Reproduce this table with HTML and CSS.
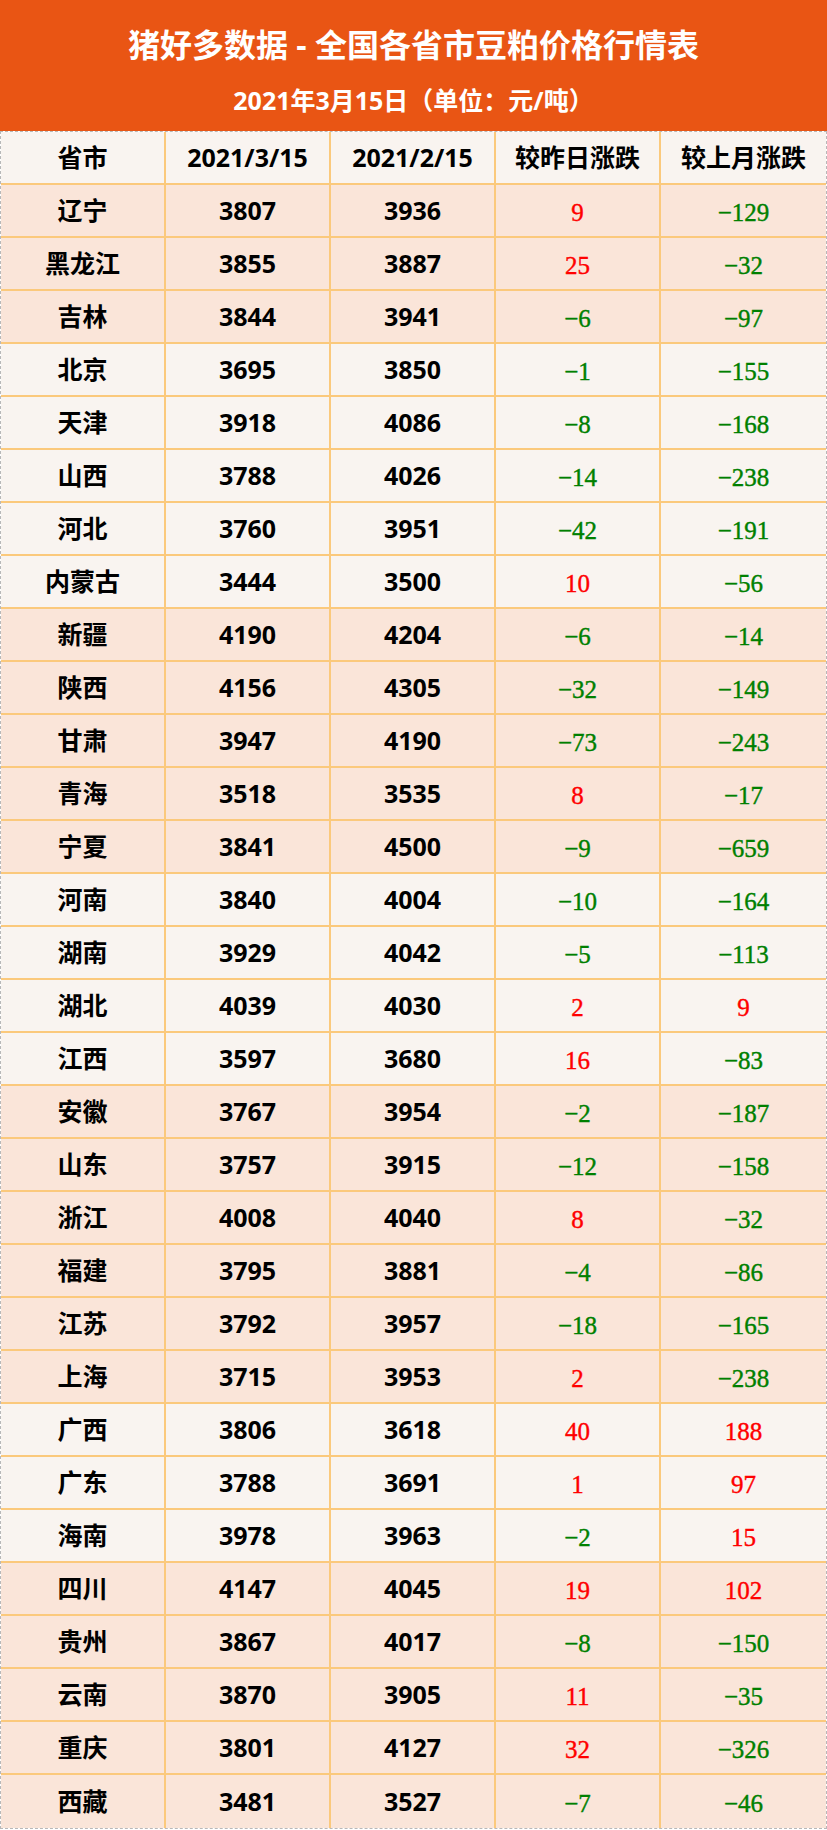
FILE: index.html
```html
<!DOCTYPE html>
<html lang="zh-CN">
<head>
<meta charset="utf-8">
<title>猪好多数据 - 全国各省市豆粕价格行情表</title>
<link rel="stylesheet" href="styles.css">
</head>
<body>
<div class="page">
  <header class="banner">
    <h1 class="title">猪好多数据 - 全国各省市豆粕价格行情表</h1>
    <p class="subtitle">2021年3月15日（单位：元/吨）</p>
  </header>
  <div class="sheet">
    <div class="row head"><div class="c">省市</div><div class="c">2021/3/15</div><div class="c">2021/2/15</div><div class="c">较昨日涨跌</div><div class="c">较上月涨跌</div></div>
    <div class="row peach"><div class="c">辽宁</div><div class="c">3807</div><div class="c">3936</div><div class="c d up">9</div><div class="c d dn">−129</div></div>
    <div class="row peach"><div class="c">黑龙江</div><div class="c">3855</div><div class="c">3887</div><div class="c d up">25</div><div class="c d dn">−32</div></div>
    <div class="row peach"><div class="c">吉林</div><div class="c">3844</div><div class="c">3941</div><div class="c d dn">−6</div><div class="c d dn">−97</div></div>
    <div class="row light"><div class="c">北京</div><div class="c">3695</div><div class="c">3850</div><div class="c d dn">−1</div><div class="c d dn">−155</div></div>
    <div class="row light"><div class="c">天津</div><div class="c">3918</div><div class="c">4086</div><div class="c d dn">−8</div><div class="c d dn">−168</div></div>
    <div class="row light"><div class="c">山西</div><div class="c">3788</div><div class="c">4026</div><div class="c d dn">−14</div><div class="c d dn">−238</div></div>
    <div class="row light"><div class="c">河北</div><div class="c">3760</div><div class="c">3951</div><div class="c d dn">−42</div><div class="c d dn">−191</div></div>
    <div class="row light"><div class="c">内蒙古</div><div class="c">3444</div><div class="c">3500</div><div class="c d up">10</div><div class="c d dn">−56</div></div>
    <div class="row peach"><div class="c">新疆</div><div class="c">4190</div><div class="c">4204</div><div class="c d dn">−6</div><div class="c d dn">−14</div></div>
    <div class="row peach"><div class="c">陕西</div><div class="c">4156</div><div class="c">4305</div><div class="c d dn">−32</div><div class="c d dn">−149</div></div>
    <div class="row peach"><div class="c">甘肃</div><div class="c">3947</div><div class="c">4190</div><div class="c d dn">−73</div><div class="c d dn">−243</div></div>
    <div class="row peach"><div class="c">青海</div><div class="c">3518</div><div class="c">3535</div><div class="c d up">8</div><div class="c d dn">−17</div></div>
    <div class="row peach"><div class="c">宁夏</div><div class="c">3841</div><div class="c">4500</div><div class="c d dn">−9</div><div class="c d dn">−659</div></div>
    <div class="row light"><div class="c">河南</div><div class="c">3840</div><div class="c">4004</div><div class="c d dn">−10</div><div class="c d dn">−164</div></div>
    <div class="row light"><div class="c">湖南</div><div class="c">3929</div><div class="c">4042</div><div class="c d dn">−5</div><div class="c d dn">−113</div></div>
    <div class="row light"><div class="c">湖北</div><div class="c">4039</div><div class="c">4030</div><div class="c d up">2</div><div class="c d up">9</div></div>
    <div class="row light"><div class="c">江西</div><div class="c">3597</div><div class="c">3680</div><div class="c d up">16</div><div class="c d dn">−83</div></div>
    <div class="row peach"><div class="c">安徽</div><div class="c">3767</div><div class="c">3954</div><div class="c d dn">−2</div><div class="c d dn">−187</div></div>
    <div class="row peach"><div class="c">山东</div><div class="c">3757</div><div class="c">3915</div><div class="c d dn">−12</div><div class="c d dn">−158</div></div>
    <div class="row peach"><div class="c">浙江</div><div class="c">4008</div><div class="c">4040</div><div class="c d up">8</div><div class="c d dn">−32</div></div>
    <div class="row peach"><div class="c">福建</div><div class="c">3795</div><div class="c">3881</div><div class="c d dn">−4</div><div class="c d dn">−86</div></div>
    <div class="row peach"><div class="c">江苏</div><div class="c">3792</div><div class="c">3957</div><div class="c d dn">−18</div><div class="c d dn">−165</div></div>
    <div class="row peach"><div class="c">上海</div><div class="c">3715</div><div class="c">3953</div><div class="c d up">2</div><div class="c d dn">−238</div></div>
    <div class="row light"><div class="c">广西</div><div class="c">3806</div><div class="c">3618</div><div class="c d up">40</div><div class="c d up">188</div></div>
    <div class="row light"><div class="c">广东</div><div class="c">3788</div><div class="c">3691</div><div class="c d up">1</div><div class="c d up">97</div></div>
    <div class="row light"><div class="c">海南</div><div class="c">3978</div><div class="c">3963</div><div class="c d dn">−2</div><div class="c d up">15</div></div>
    <div class="row peach"><div class="c">四川</div><div class="c">4147</div><div class="c">4045</div><div class="c d up">19</div><div class="c d up">102</div></div>
    <div class="row peach"><div class="c">贵州</div><div class="c">3867</div><div class="c">4017</div><div class="c d dn">−8</div><div class="c d dn">−150</div></div>
    <div class="row peach"><div class="c">云南</div><div class="c">3870</div><div class="c">3905</div><div class="c d up">11</div><div class="c d dn">−35</div></div>
    <div class="row peach"><div class="c">重庆</div><div class="c">3801</div><div class="c">4127</div><div class="c d up">32</div><div class="c d dn">−326</div></div>
    <div class="row peach last"><div class="c">西藏</div><div class="c">3481</div><div class="c">3527</div><div class="c d dn">−7</div><div class="c d dn">−46</div></div>
  </div>
</div>
</body>
</html>
```
FILE: styles.css
```css
html, body {
  margin: 0;
  padding: 0;
  background: #ffffff;
}

.page {
  width: 827px;
  font-family: "Open Sans", "Noto Sans CJK SC", sans-serif;
  font-weight: 700;
  color: #000000;
}

.banner {
  height: 131px;
  background: #e95514;
  color: #ffffff;
  display: flex;
  flex-direction: column;
  align-items: center;
  box-sizing: border-box;
  padding-top: 24px;
}

.title {
  margin: 0;
  font-size: 32px;
  line-height: 42px;
  font-weight: 700;
  white-space: nowrap;
}

.subtitle {
  margin: 18px 0 0 0;
  font-size: 25px;
  line-height: 32px;
  font-weight: 700;
  white-space: nowrap;
}

.sheet {
  width: 827px;
  box-sizing: border-box;
  border: 1px dashed #b8b8b8;
}

.row {
  display: grid;
  grid-template-columns: repeat(5, 1fr);
  height: 53px;
  box-sizing: border-box;
  border-bottom: 2px solid #fbc97c;
}

.row.last {
  border-bottom: none;
}

.head,
.light {
  background: #f9f4f0;
}

.peach {
  background: #fae5d9;
}

.c {
  display: flex;
  align-items: center;
  justify-content: center;
  border-right: 2px solid #fbc97c;
  font-size: 25px;
  line-height: 1;
  white-space: nowrap;
}

.c:last-child {
  border-right: none;
}

.d {
  font-family: "Liberation Serif", "Times New Roman", serif;
  font-weight: 400;
  font-size: 25px;
  padding-top: 3px;
  -webkit-text-stroke: 0.4px currentColor;
}

.up {
  color: #ff0000;
}

.dn {
  color: #008000;
}
```
